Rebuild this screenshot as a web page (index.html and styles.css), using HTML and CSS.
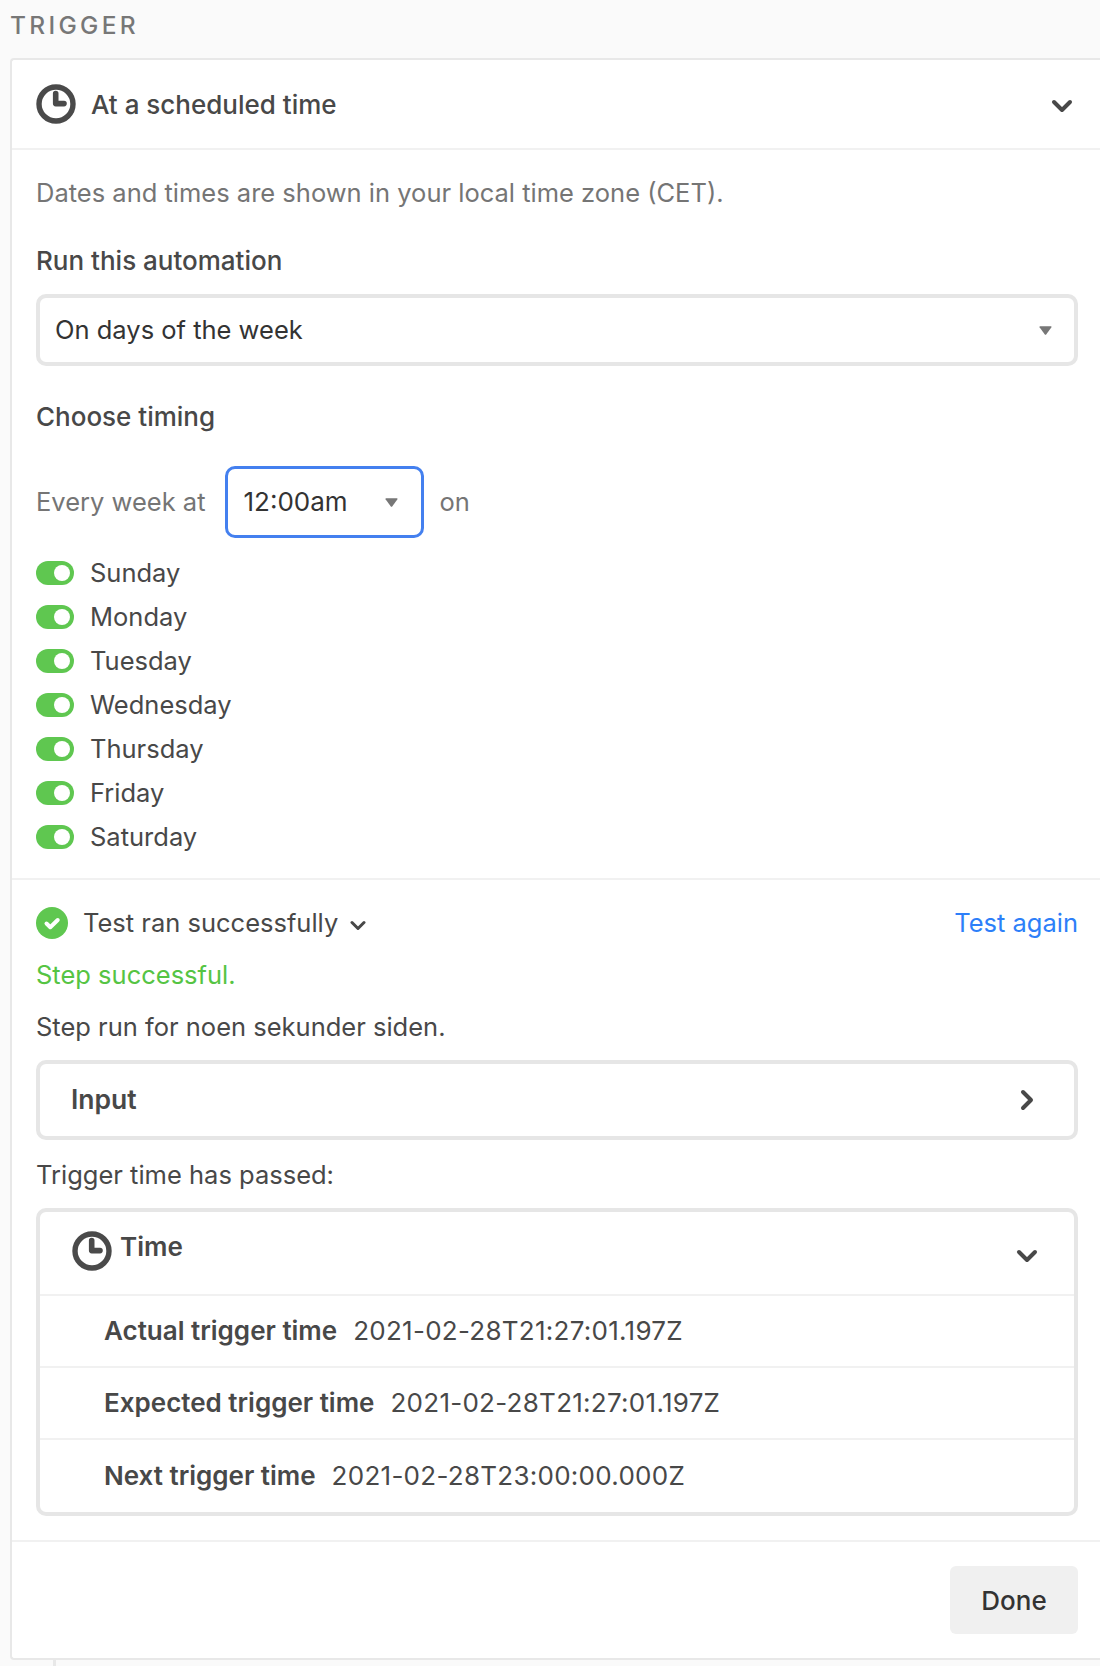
FILE: index.html
```html
<!DOCTYPE html>
<html lang="en">
<head>
<meta charset="utf-8">
<title>Trigger</title>
<link rel="stylesheet" href="styles.css">
</head>
<body>
<div class="page">
  <div class="section-title">TRIGGER</div>
  <div class="card">
    <div class="card-header">
      <svg class="clock" viewBox="0 0 40 40"><circle cx="20" cy="20" r="17" fill="none" stroke="currentColor" stroke-width="5.4"/><path d="M19.7 9.5V19.6H28" fill="none" stroke="currentColor" stroke-width="5.6" stroke-linejoin="round" stroke-linecap="round"/></svg>
      <span class="card-title">At a scheduled time</span>
      <svg class="chevron-lg" viewBox="0 0 22 14"><path d="M3 3L11 11L19 3" fill="none" stroke="currentColor" stroke-width="4" stroke-linecap="round" stroke-linejoin="round"/></svg>
    </div>
    <div class="config">
      <p class="hint">Dates and times are shown in your local time zone (CET).</p>
      <div class="label label-run">Run this automation</div>
      <div class="select select-full">
        <span>On days of the week</span>
        <svg class="caret" viewBox="0 0 12 8"><path d="M1 0H11Q12 0 11.5 1L6.8 7.4Q6 8.4 5.2 7.4L.5 1Q0 0 1 0Z" fill="currentColor"/></svg>
      </div>
      <div class="label label-timing">Choose timing</div>
      <div class="timing">
        <span class="muted">Every week at</span>
        <div class="select select-time">
          <span>12:00am</span>
          <svg class="caret" viewBox="0 0 12 8"><path d="M1 0H11Q12 0 11.5 1L6.8 7.4Q6 8.4 5.2 7.4L.5 1Q0 0 1 0Z" fill="currentColor"/></svg>
        </div>
        <span class="muted">on</span>
      </div>
      <ul class="days">
        <li class="day"><span class="toggle"></span>Sunday</li>
        <li class="day"><span class="toggle"></span>Monday</li>
        <li class="day"><span class="toggle"></span>Tuesday</li>
        <li class="day"><span class="toggle"></span>Wednesday</li>
        <li class="day"><span class="toggle"></span>Thursday</li>
        <li class="day"><span class="toggle"></span>Friday</li>
        <li class="day"><span class="toggle"></span>Saturday</li>
      </ul>
    </div>
    <div class="result">
      <div class="result-head">
        <svg class="check" viewBox="0 0 32 32"><circle cx="16" cy="16" r="16" fill="currentColor"/><path d="M10.5 16.5L14.3 20.2L21.7 13" fill="none" stroke="#fff" stroke-width="4" stroke-linecap="round" stroke-linejoin="round"/></svg>
        <span class="result-title">Test ran successfully</span>
        <svg class="chevron-sm" viewBox="0 0 16 11"><path d="M2 2.5L8 8.5L14 2.5" fill="none" stroke="currentColor" stroke-width="3" stroke-linecap="round" stroke-linejoin="round"/></svg>
        <a class="test-again">Test again</a>
      </div>
      <div class="success">Step successful.</div>
      <div class="ran">Step run for noen sekunder siden.</div>
      <div class="box input-box">
        <span class="strong">Input</span>
        <svg class="chevron-right" viewBox="0 0 14 22"><path d="M3 3L11 11L3 19" fill="none" stroke="currentColor" stroke-width="4" stroke-linecap="round" stroke-linejoin="round"/></svg>
      </div>
      <div class="passed">Trigger time has passed:</div>
      <div class="box time-box">
        <div class="time-head">
          <svg class="clock clock-time" viewBox="0 0 40 40"><circle cx="20" cy="20" r="17" fill="none" stroke="currentColor" stroke-width="5.4"/><path d="M19.7 9.5V19.6H28" fill="none" stroke="currentColor" stroke-width="5.6" stroke-linejoin="round" stroke-linecap="round"/></svg>
          <span class="strong time-title">Time</span>
          <svg class="chevron-lg chevron-time" viewBox="0 0 22 14"><path d="M3 3L11 11L19 3" fill="none" stroke="currentColor" stroke-width="4" stroke-linecap="round" stroke-linejoin="round"/></svg>
        </div>
        <div class="time-row"><span class="strong">Actual trigger time</span><span class="stamp">2021-02-28T21:27:01.197Z</span></div>
        <div class="time-row"><span class="strong">Expected trigger time</span><span class="stamp">2021-02-28T21:27:01.197Z</span></div>
        <div class="time-row"><span class="strong">Next trigger time</span><span class="stamp">2021-02-28T23:00:00.000Z</span></div>
      </div>
    </div>
    <div class="footer"><button class="done">Done</button></div>
  </div>
  <div class="connector"></div>
</div>
</body>
</html>
```

FILE: styles.css
```css
* { box-sizing: border-box; }
html, body { margin: 0; padding: 0; }
body {
  background: #fafafa;
  color: #484848;
  font-family: Inter, "Liberation Sans", sans-serif;
  font-size: 25.5px;
  line-height: 32px;
  height: 1666px;
  overflow: hidden;
}
.page { padding-left: 10px; height: 1666px; }
.section-title {
  height: 58px;
  padding-top: 9px;
  font-size: 24.5px;
  line-height: 32px;
  letter-spacing: 3.3px;
  font-weight: 500;
  color: #777;
}
.card {
  background: #fff;
  border: 2px solid #e8e8e8;
  border-right: 0;
  border-radius: 4px 0 0 4px;
  height: 1602px;
  display: flex;
  flex-direction: column;
}
.card-header {
  height: 90px;
  flex: none;
  display: flex;
  align-items: center;
  padding: 0 27px 0 24px;
  border-bottom: 2px solid #f1f1f1;
}
.clock { width: 40px; height: 40px; flex: none; color: #4a4a4a; }
.card-title { margin: 2px 0 0 15px; font-size: 26px; font-weight: 500; flex: 1; }
.chevron-lg { width: 22px; height: 14px; margin-top: 4px; flex: none; color: #484848; }
.config {
  height: 730px;
  flex: none;
  padding: 27px 22px 0 24px;
  border-bottom: 2px solid #f1f1f1;
}
.hint { margin: 0; color: #757575; }
.label { font-size: 26px; font-weight: 500; }
.label-run { margin-top: 36px; }
.select {
  display: flex;
  align-items: center;
  justify-content: space-between;
  height: 72px;
  border-radius: 10px;
  background: #fff;
  color: #333;
}
.select-full { margin-top: 17px; border: 4px solid #e6e6e6; padding: 0 22px 0 15px; }
.label-timing { margin-top: 35px; }
.caret { width: 13px; height: 9px; color: #777; flex: none; }
.timing { margin-top: 33px; display: flex; align-items: center; height: 72px; }
.muted { color: #757575; }
.select-time {
  width: 199px;
  margin: 0 16px 0 19px;
  border: 3px solid #4480ef;
  padding: 0 23px 0 16px;
  font-size: 26px;
}
.days { list-style: none; margin: 13px 0 0; padding: 0; }
.day { height: 44px; display: flex; align-items: center; }
.toggle {
  position: relative;
  width: 38px;
  height: 24px;
  margin-right: 16px;
  border-radius: 12px;
  background: #5fc750;
  flex: none;
}
.toggle::after {
  content: "";
  position: absolute;
  right: 4px;
  top: 4px;
  width: 16px;
  height: 16px;
  border-radius: 50%;
  background: #fff;
}
.result {
  height: 662px;
  flex: none;
  padding: 27px 22px 0 24px;
  border-bottom: 2px solid #f1f1f1;
}
.result-head { display: flex; align-items: center; height: 32px; }
.check { width: 32px; height: 32px; color: #5fc750; flex: none; }
.result-title { margin-left: 15px; }
.chevron-sm { width: 16px; height: 11px; margin: 4px 0 0 12px; color: #484848; flex: none; }
.test-again { margin-left: auto; color: #2d7ff9; }
.success { margin-top: 20px; color: #55c443; }
.ran { margin-top: 20px; }
.box { border: 4px solid #e6e6e6; border-radius: 10px; background: #fff; }
.input-box {
  margin-top: 17px;
  height: 80px;
  display: flex;
  align-items: center;
  justify-content: space-between;
  padding: 0 40px 0 31px;
}
.strong { font-weight: 600; font-size: 26px; }
.input-box .strong { font-size: 26.5px; margin-bottom: 2px; }
.chevron-right { width: 14px; height: 22px; color: #484848; flex: none; }
.passed { margin-top: 19px; }
.time-box { margin-top: 17px; height: 308px; }
.time-head {
  height: 84px;
  display: flex;
  align-items: center;
  padding: 0 36px 0 32px;
  border-bottom: 2px solid #f1f1f1;
}
.clock-time { margin-bottom: 4px; }
.time-title { margin: 0 0 12px 8px; flex: 1; }
.chevron-time { margin-top: 6px; }
.time-row {
  height: 72px;
  display: flex;
  align-items: center;
  gap: 16px;
  padding-left: 64px;
  border-bottom: 2px solid #f1f1f1;
}
.time-row:last-child { border-bottom: 0; }
.stamp { font-size: 26px; letter-spacing: 0.27px; }
.footer { flex: 1; display: flex; justify-content: flex-end; align-items: flex-start; padding: 24px 22px 0 0; }
.done {
  width: 128px;
  height: 68px;
  border: 0;
  border-radius: 6px;
  background: #f0f0f0;
  color: #333;
  font: 500 26px Inter, "Liberation Sans", sans-serif;
}
.connector { width: 3px; height: 6px; margin-left: 43px; background: #e8e8e8; }
```
